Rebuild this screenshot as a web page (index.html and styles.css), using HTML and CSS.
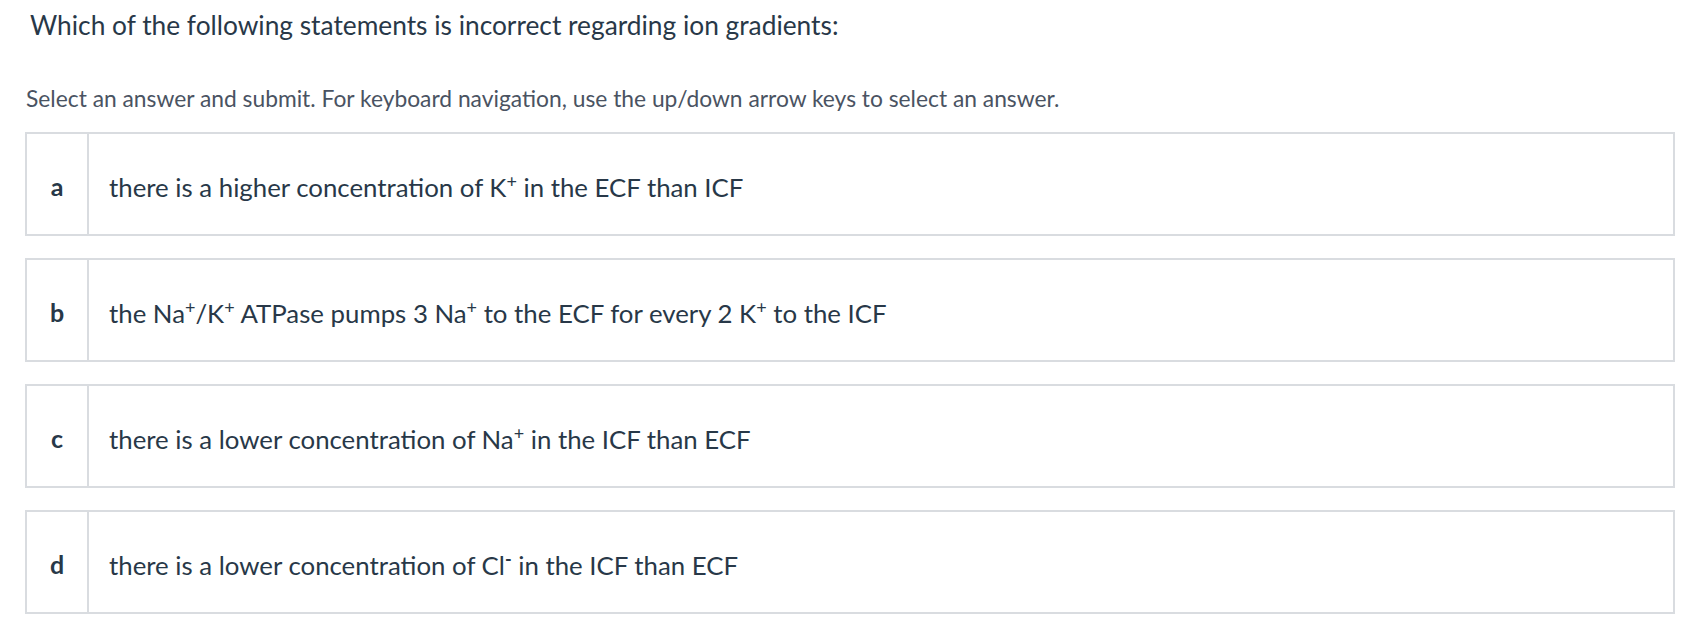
FILE: index.html
```html
<!DOCTYPE html>
<html lang="en">
<head>
<meta charset="utf-8">
<title>Question</title>
<link rel="stylesheet" href="styles.css">
</head>
<body>
<main class="quiz">
  <h1 class="question">Which of the following statements is incorrect regarding ion gradients:</h1>
  <p class="instructions">Select an answer and submit. For keyboard navigation, use the up/down arrow keys to select an answer.</p>
  <ol class="answers">
    <li class="answer"><span class="letter">a</span><span class="text">there is a higher concentration of K<sup>+</sup> in the ECF than ICF</span></li>
    <li class="answer"><span class="letter">b</span><span class="text">the Na<sup>+</sup>/K<sup>+</sup> ATPase pumps 3 Na<sup>+</sup> to the ECF for every 2 K<sup>+</sup> to the ICF</span></li>
    <li class="answer"><span class="letter">c</span><span class="text">there is a lower concentration of Na<sup>+</sup> in the ICF than ECF</span></li>
    <li class="answer"><span class="letter">d</span><span class="text">there is a lower concentration of Cl<sup class="minus">-</sup> in the ICF than ECF</span></li>
  </ol>
</main>
</body>
</html>
```

FILE: styles.css
```css
html, body {
  margin: 0;
  padding: 0;
  background: #ffffff;
}

body {
  font-family: Lato, "Open Sans", sans-serif;
  color: #283848;
}

.quiz {
  padding: 8px 19px 0 25px;
}

.question {
  margin: 0;
  padding-left: 5px;
  font-size: 26.3px;
  line-height: 34px;
  font-weight: 400;
  color: #283848;
}

.instructions {
  margin: 41px 0 0 1px;
  font-size: 22.8px;
  line-height: 30px;
  color: #4a5362;
}

.answers {
  list-style: none;
  margin: 19px 0 0 0;
  padding: 0;
  display: flex;
  flex-direction: column;
  gap: 22px;
}

.answer {
  display: flex;
  align-items: stretch;
  height: 104px;
  box-sizing: border-box;
  border: 2px solid #d9dce0;
}

.letter {
  width: 62px;
  flex: none;
  box-sizing: border-box;
  padding-top: 4px;
  border-right: 2px solid #d9dce0;
  display: flex;
  align-items: center;
  justify-content: center;
  font-weight: 700;
  font-size: 25px;
  color: #283848;
}

.text {
  align-self: center;
  padding: 6px 0 0 20px;
  font-size: 25.8px;
  color: #283848;
}

sup {
  font-size: 18px;
  line-height: 0;
  vertical-align: baseline;
  position: relative;
  top: -9px;
}

sup.minus {
  font-weight: 700;
}
```
